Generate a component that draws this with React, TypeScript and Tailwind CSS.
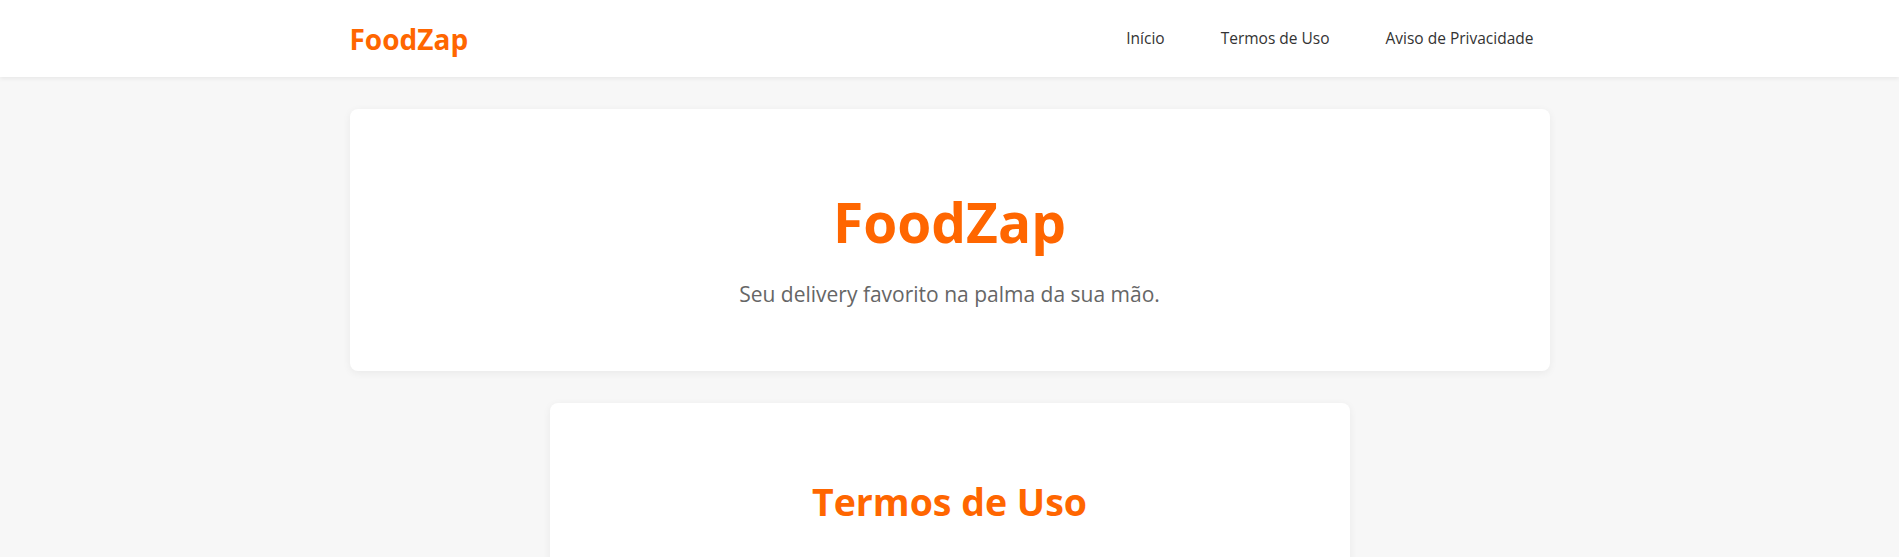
export default function App() {
  const links = ['Início', 'Termos de Uso', 'Aviso de Privacidade']
  return (
    <div className="min-h-screen bg-[#f7f7f7] text-[#333] [font-family:'Open_Sans',sans-serif]">
      <header className="bg-white shadow-[0_2px_4px_rgba(0,0,0,0.06)]">
        <div className="mx-auto flex h-[77px] max-w-[1200px] items-center justify-between">
          <a href="#" className="text-[28px] font-bold text-[#ff6600]">FoodZap</a>
          <nav className="flex gap-6">
            {links.map((l) => (
              <a key={l} href="#" className="px-4 text-[15.5px] font-medium text-[#333]">
                {l}
              </a>
            ))}
          </nav>
        </div>
      </header>

      <main className="mx-auto flex max-w-[1200px] flex-col items-center gap-8 pt-8">
        <section className="w-full rounded-lg bg-white pt-[80px] pb-[62px] text-center shadow-[0_2px_8px_rgba(0,0,0,0.06)]">
          <h1 className="text-[55px] leading-[1.2] font-bold text-[#ff6600]">FoodZap</h1>
          <p className="mt-6 text-[21px] leading-[30px] text-[#666]">Seu delivery favorito na palma da sua mão.</p>
        </section>

        <section className="w-[800px] rounded-lg bg-white pt-[76px] pb-12 text-center shadow-[0_2px_8px_rgba(0,0,0,0.06)]">
          <h2 className="text-[37.5px] leading-[1.2] font-bold text-[#ff6600]">Termos de Uso</h2>
          <div className="h-40" />
        </section>
      </main>
    </div>
  )
}
